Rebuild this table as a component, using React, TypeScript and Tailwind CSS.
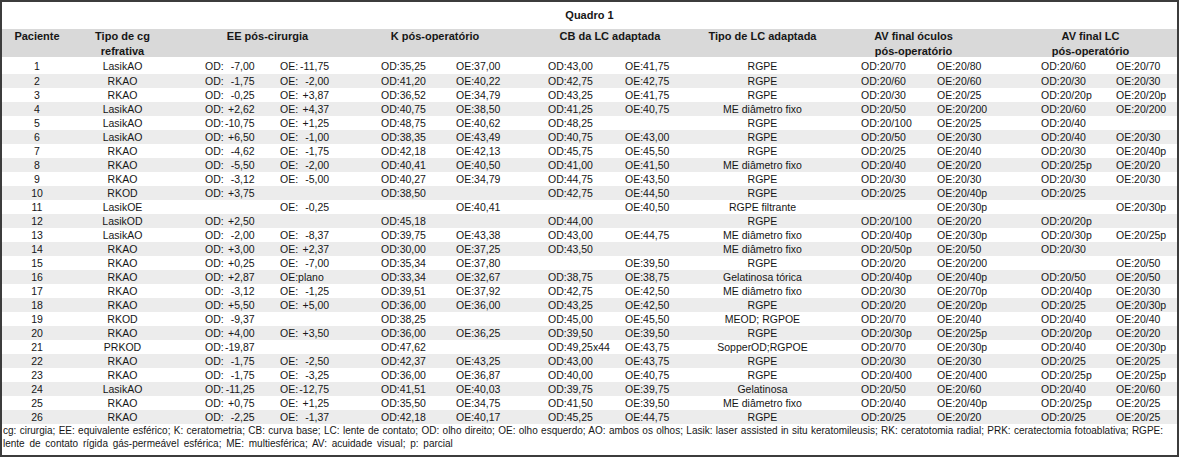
const rows: string[][] = [
  ['1', 'LasikAO', '-7,00', '-11,75', '35,25', '37,00', '43,00', '41,75', 'RGPE', '20/70', '20/80', '20/60', '20/70'],
  ['2', 'RKAO', '-1,75', '-2,00', '41,20', '40,22', '42,75', '42,75', 'RGPE', '20/60', '20/60', '20/30', '20/30'],
  ['3', 'RKAO', '-0,25', '+3,87', '36,52', '34,79', '43,25', '41,75', 'RGPE', '20/30', '20/25', '20/20p', '20/20p'],
  ['4', 'LasikAO', '+2,62', '+4,37', '40,75', '38,50', '41,25', '40,75', 'ME diâmetro fixo', '20/50', '20/200', '20/60', '20/200'],
  ['5', 'LasikAO', '-10,75', '+1,25', '48,75', '40,62', '48,25', '', 'RGPE', '20/100', '20/25', '20/40', ''],
  ['6', 'LasikAO', '+6,50', '-1,00', '38,35', '43,49', '40,75', '43,00', 'RGPE', '20/50', '20/30', '20/40', '20/30'],
  ['7', 'RKAO', '-4,62', '-1,75', '42,18', '42,13', '45,75', '45,50', 'RGPE', '20/25', '20/40', '20/30', '20/40p'],
  ['8', 'RKAO', '-5,50', '-2,00', '40,41', '40,50', '41,00', '41,50', 'ME diâmetro fixo', '20/40', '20/20', '20/25p', '20/20'],
  ['9', 'RKAO', '-3,12', '-5,00', '40,27', '34,79', '44,75', '43,50', 'RGPE', '20/30', '20/30', '20/30', '20/30'],
  ['10', 'RKOD', '+3,75', '', '38,50', '', '42,75', '44,50', 'RGPE', '20/25', '20/40p', '20/25', ''],
  ['11', 'LasikOE', '', '-0,25', '', '40,41', '', '40,50', 'RGPE filtrante', '', '20/30p', '', '20/30p'],
  ['12', 'LasikOD', '+2,50', '', '45,18', '', '44,00', '', 'RGPE', '20/100', '20/20', '20/20p', ''],
  ['13', 'LasikAO', '-2,00', '-8,37', '39,75', '43,38', '43,00', '44,75', 'ME diâmetro fixo', '20/40p', '20/30p', '20/30p', '20/25p'],
  ['14', 'RKAO', '+3,00', '+2,37', '30,00', '37,25', '43,50', '', 'ME diâmetro fixo', '20/50p', '20/50', '20/30', ''],
  ['15', 'RKAO', '+0,25', '-7,00', '35,34', '37,80', '', '39,50', 'RGPE', '20/20', '20/200', '', '20/50'],
  ['16', 'RKAO', '+2,87', 'plano', '33,34', '32,67', '38,75', '38,75', 'Gelatinosa tórica', '20/40p', '20/40p', '20/50', '20/50'],
  ['17', 'RKAO', '-3,12', '-1,25', '39,51', '37,92', '42,75', '42,50', 'ME diâmetro fixo', '20/30', '20/70p', '20/40p', '20/30'],
  ['18', 'RKAO', '+5,50', '+5,00', '36,00', '36,00', '43,25', '42,50', 'RGPE', '20/20', '20/20p', '20/25', '20/30p'],
  ['19', 'RKOD', '-9,37', '', '38,25', '', '45,00', '45,50', 'MEOD; RGPOE', '20/70', '20/40', '20/40', '20/40'],
  ['20', 'RKAO', '+4,00', '+3,50', '36,00', '36,25', '39,50', '39,50', 'RGPE', '20/30p', '20/25p', '20/20p', '20/20'],
  ['21', 'PRKOD', '-19,87', '', '47,62', '', '49,25x44', '43,75', 'SopperOD;RGPOE', '20/70', '20/30p', '20/40', '20/30p'],
  ['22', 'RKAO', '-1,75', '-2,50', '42,37', '43,25', '43,00', '43,75', 'RGPE', '20/30', '20/30', '20/25', '20/25'],
  ['23', 'RKAO', '-1,75', '-3,25', '36,00', '36,87', '40,00', '40,75', 'RGPE', '20/400', '20/400', '20/25p', '20/25p'],
  ['24', 'LasikAO', '-11,25', '-12,75', '41,51', '40,03', '39,75', '39,75', 'Gelatinosa', '20/50', '20/60', '20/40', '20/60'],
  ['25', 'RKAO', '+0,75', '+1,25', '35,50', '34,75', '41,50', '39,50', 'ME diâmetro fixo', '20/40', '20/40p', '20/25p', '20/25'],
  ['26', 'RKAO', '-2,25', '-1,37', '42,18', '40,17', '45,25', '44,75', 'RGPE', '20/25', '20/20', '20/25', '20/25'],
];

const grid =
  'grid grid-cols-[73px_95px_108px_87px_91px_74px_95px_75px_125px_112px_73px_106px_61px]';

// EE values sit right-aligned after the label
function EyeValue({ label, value }: { label: string; value: string }) {
  if (!value) return null;
  if (!/\d/.test(value)) return <span>{label}:{value}</span>;
  return (
    <span className="inline-flex">
      <span>{label}:</span>
      <span className="w-[31px] text-right">{value}</span>
    </span>
  );
}

function Plain({ label, value }: { label: string; value: string }) {
  if (!value) return null;
  return <span>{label}:{value}</span>;
}

export default function App() {
  return (
    <div
      className="w-[1179px] h-[458px] bg-white text-[#161616]"
      style={{ fontFamily: '"Liberation Sans", Arial, sans-serif' }}
    >
      <div className="w-[1179px] h-[457px] border-2 border-[#3c3c3c] flex flex-col">
        {/* Title */}
        <div className="h-[27px] flex items-center justify-center text-[11px] font-bold">
          Quadro 1
        </div>

        {/* Header */}
        <div className={`${grid} h-[28px] bg-[#d9d9d9] text-[11px] font-bold leading-[15px]`}>
          <div className="text-center pr-[3px]">Paciente</div>
          <div className="text-center">
            Tipo de cg
            <br />
            refrativa
          </div>
          <div className="col-span-2 text-center">EE pós-cirurgia</div>
          <div className="col-span-2 text-center pr-[25px]">K pós-operatório</div>
          <div className="col-span-2 text-center pr-[10px]">CB da LC adaptada</div>
          <div className="text-center">Tipo de LC adaptada</div>
          <div className="col-span-2 text-center pr-[8px]">
            AV final óculos
            <br />
            pós-operatório
          </div>
          <div className="col-span-2 text-center pr-[6px]">
            AV final LC
            <br />
            pós-operatório
          </div>
        </div>

        {/* Body */}
        <div className="text-[10.5px] leading-[14px]">
          {rows.map((r, i) => (
            <div
              key={r[0]}
              className={`${grid} items-center ${i === 0 ? 'h-[17px] pt-[1px]' : 'h-[14px]'} ${
                i % 2 === 1 ? 'bg-[#ececec]' : 'bg-white'
              }`}
            >
              <div className="text-center pr-[3px]">{r[0]}</div>
              <div className="text-center">{r[1]}</div>
              <div className="pl-[35px]">
                <EyeValue label="OD" value={r[2]} />
              </div>
              <div className="pl-[2px]">
                <EyeValue label="OE" value={r[3]} />
              </div>
              <div className="pl-[16px]">
                <Plain label="OD" value={r[4]} />
              </div>
              <div>
                <Plain label="OE" value={r[5]} />
              </div>
              <div className="pl-[18px]">
                <Plain label="OD" value={r[6]} />
              </div>
              <div>
                <Plain label="OE" value={r[7]} />
              </div>
              <div className="text-center">{r[8]}</div>
              <div className="pl-[36px]">
                <Plain label="OD" value={r[9]} />
              </div>
              <div>
                <Plain label="OE" value={r[10]} />
              </div>
              <div className="pl-[31px]">
                <Plain label="OD" value={r[11]} />
              </div>
              <div>
                <Plain label="OE" value={r[12]} />
              </div>
            </div>
          ))}
        </div>

        {/* Footnote */}
        <div className="text-[10px] leading-[13px] pl-[1px] pr-[14px]">
          <p className="text-justify [text-align-last:justify] whitespace-nowrap overflow-hidden">
            cg: cirurgia; EE: equivalente esférico; K: ceratometria; CB: curva base; LC: lente de
            contato; OD: olho direito; OE: olho esquerdo; AO: ambos os olhos; Lasik: laser assisted
            in situ keratomileusis; RK: ceratotomia radial; PRK: ceratectomia fotoablativa; RGPE:
          </p>
          <p className="[word-spacing:2px]">
            lente de contato rígida gás-permeável esférica; ME: multiesférica; AV: acuidade visual;
            p: parcial
          </p>
        </div>
      </div>
    </div>
  );
}
